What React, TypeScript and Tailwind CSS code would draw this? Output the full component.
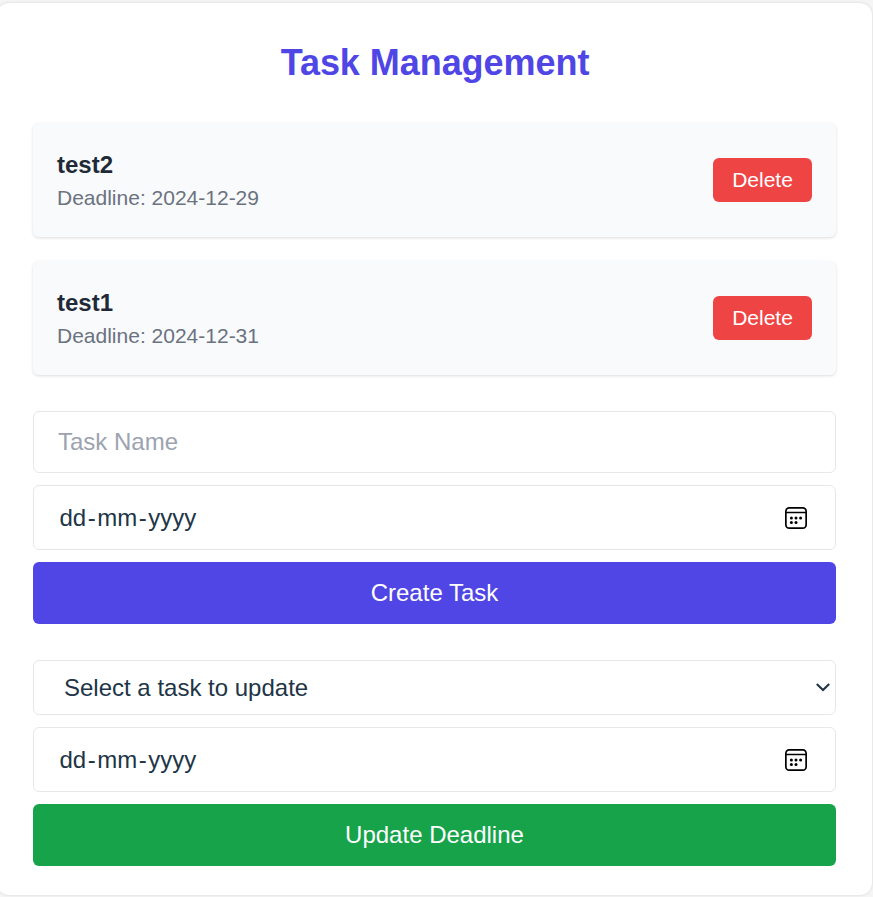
const tasks = [
  { name: "test2", deadline: "2024-12-29" },
  { name: "test1", deadline: "2024-12-31" },
];

function CalendarIcon() {
  return (
    <svg width="22" height="22" viewBox="0 0 22 22" fill="none" className="shrink-0">
      <rect x="0.85" y="0.85" width="20.3" height="20.3" rx="3.4" stroke="black" strokeWidth="1.7" />
      <path d="M1 5.5H21" stroke="black" strokeWidth="1.5" />
      <g fill="black">
        <circle cx="6.4" cy="11" r="1.5" />
        <circle cx="11" cy="11" r="1.5" />
        <circle cx="15.6" cy="11" r="1.5" />
        <circle cx="6.4" cy="15.6" r="1.5" />
        <circle cx="11" cy="15.6" r="1.5" />
      </g>
    </svg>
  );
}

function DateField() {
  return (
    <div className="flex h-[65px] items-center justify-between rounded-md border border-[#e5e7eb] bg-white pr-7 pl-[25.5px] text-[#213547]">
      <div className="flex">
        <span>dd</span>
        <span className="mx-[1.5px]">-</span>
        <span>mm</span>
        <span className="mx-[1.5px]">-</span>
        <span>yyyy</span>
      </div>
      <CalendarIcon />
    </div>
  );
}

export default function App() {
  return (
    <div className="h-[897px] w-[873px] overflow-hidden bg-[#f5f5f5] font-['Liberation_Sans',Arial,sans-serif] text-2xl">
      <div className="pt-[3px]">
        <main className="-ml-[3px] h-[892px] w-[875px] rounded-xl bg-white px-9 pt-9 shadow-[0_0_3px_rgba(0,0,0,0.14)]">
          <h1 className="mb-9 pl-px text-center text-4xl leading-[48px] font-bold tracking-[-0.05px] text-[#4f46e5]">Task Management</h1>
          <ul className="flex flex-col gap-6">
            {tasks.map((task) => (
              <li
                key={task.name}
                className="flex h-[114px] items-center justify-between rounded-md bg-[#f9fafb] px-6 shadow-[0_1px_3px_rgba(0,0,0,0.14)]"
              >
                <div>
                  <h2 className="leading-9 font-bold text-[#1f2937]">{task.name}</h2>
                  <p className="text-[21px] leading-[30px] text-[#6b7280]">Deadline: {task.deadline}</p>
                </div>
                <button className="h-11 w-[99px] rounded-md bg-[#ef4444] text-[21px] leading-[30px] text-white">
                  Delete
                </button>
              </li>
            ))}
          </ul>
          <section className="mt-9 flex flex-col">
            <input
              type="text"
              placeholder="Task Name"
              className="mb-3 h-[62px] w-full rounded-md border border-[#e5e7eb] bg-white px-6 placeholder:text-[#9ca3af]"
            />
            <DateField />
            <button className="mt-3 h-[62px] rounded-md bg-[#4f46e5] text-white">Create Task</button>
          </section>
          <section className="mt-9 flex flex-col">
            <div className="mb-3 flex h-[55px] items-center justify-between rounded-md border border-[#e5e7eb] bg-white pr-[5px] pl-[30px] text-[#213547]">
              <span>Select a task to update</span>
              <svg width="14" height="9" viewBox="0 0 14 9" fill="none">
                <path d="M0.8 1L7 7.1L13.2 1" stroke="#213547" strokeWidth="2.1" />
              </svg>
            </div>
            <DateField />
            <button className="mt-3 h-[62px] rounded-md bg-[#16a34a] text-white">Update Deadline</button>
          </section>
        </main>
      </div>
    </div>
  );
}
